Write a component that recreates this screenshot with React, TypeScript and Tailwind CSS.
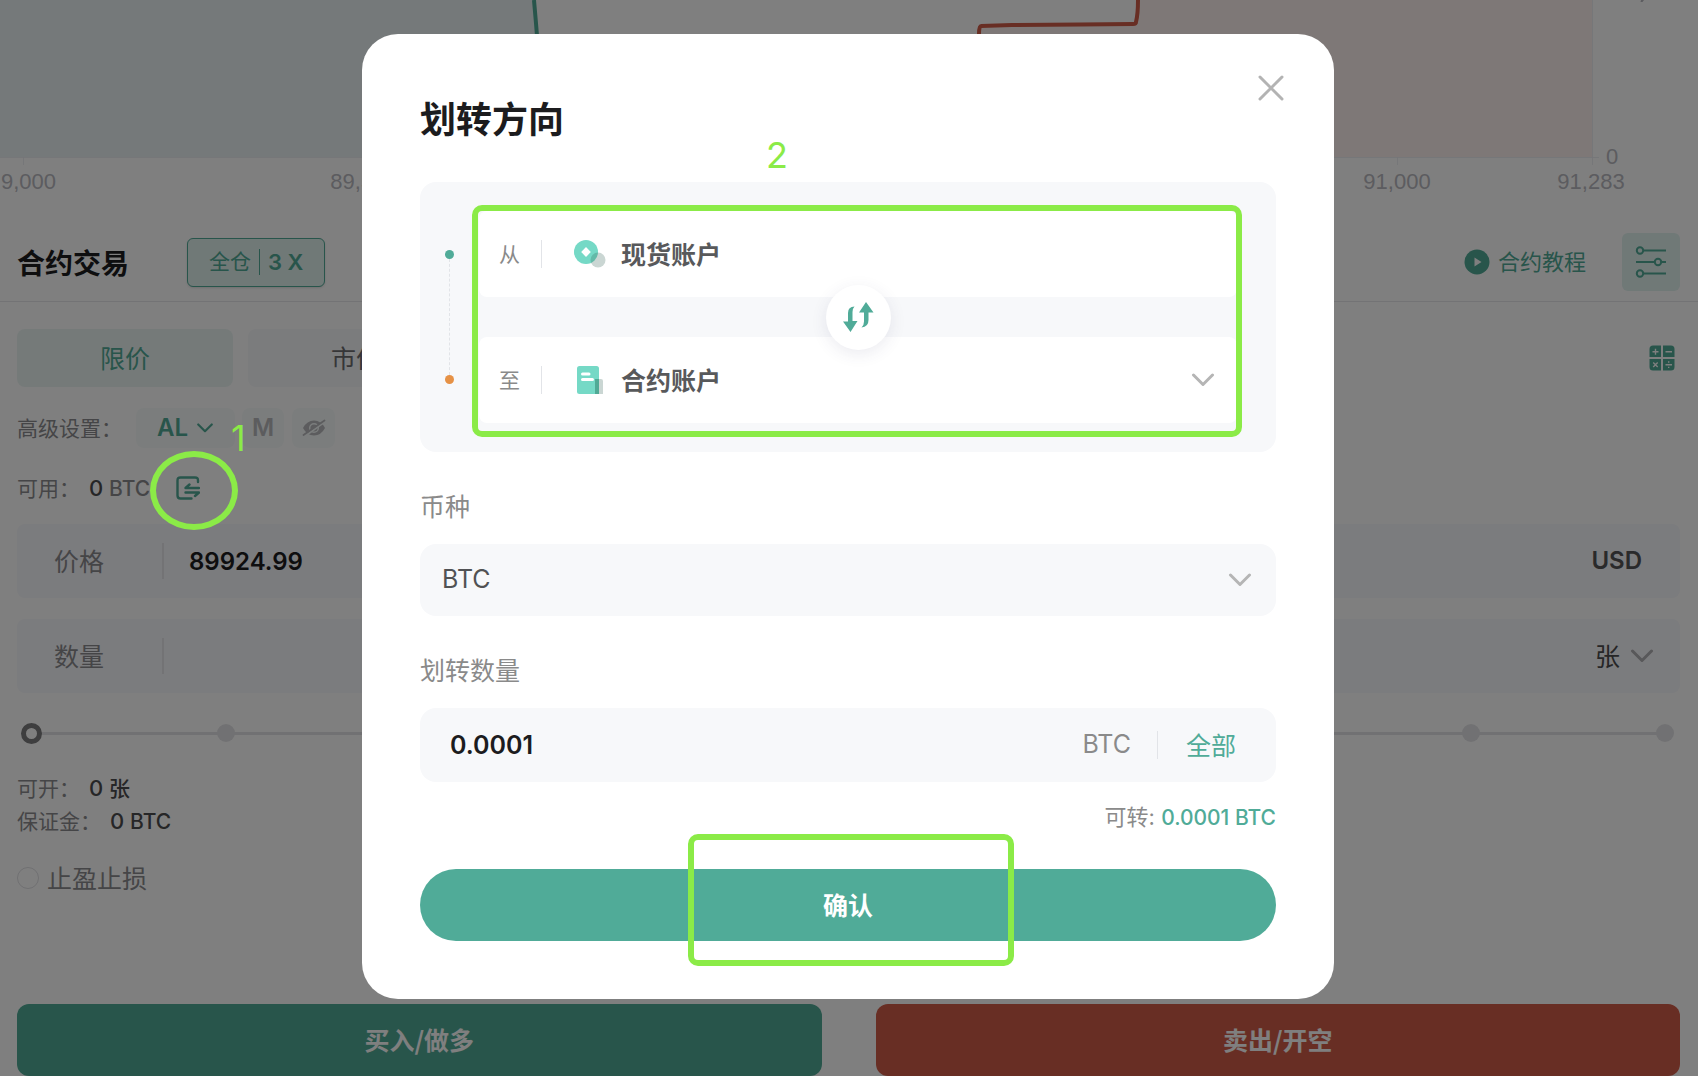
import { useState, type ReactNode } from "react";
import clsx from "clsx";

const cjk = "font-['Noto_Sans_CJK_SC',sans-serif]";

function Chevron({ className }: { className?: string }) {
  return (
    <svg
      viewBox="0 0 24 14"
      fill="none"
      stroke="currentColor"
      strokeWidth="3"
      strokeLinecap="round"
      strokeLinejoin="round"
      className={className}
      aria-hidden="true"
    >
      <path d="M2.5 2 12 11.5 21.5 2" />
    </svg>
  );
}

function DepthChart() {
  return (
    <svg viewBox="0 0 1698 223" className="block h-auto w-full" role="img" aria-label="深度图">
      <path d="M0 0H534C535 12 536 22 537 36L540 157H0Z" fill="#ebf3f4" />
      <path d="M1138 0 1136 24 981 26 979 60V157H1592V0Z" fill="#fcf1ef" />
      <path d="M534 0C535 12 536 22 537 36" fill="none" stroke="#50aa96" strokeWidth="4" />
      <path
        d="M1138 0C1138 10 1137 18 1136 22Q1136 24 1133 24L1080 24.500 1012 25 981 26Q979 26 979 34V60"
        fill="none"
        stroke="#d15c48"
        strokeWidth="4"
      />
      <path
        d="M0 157.500H1599M1592.500 0V165M23.500 157V165M364.500 157V165M1397.500 157V165"
        stroke="#e8eaf0"
        strokeOpacity="0.8"
        fill="none"
      />
      <g
        className="font-['Liberation_Sans',Arial,sans-serif] text-[22px]"
        fill="#b8b8c0"
        textAnchor="middle"
      >
        <text x="1" y="189" textAnchor="start">
          9,000
        </text>
        <text x="364" y="189">89,500</text>
        <text x="1397" y="189">91,000</text>
        <text x="1591" y="189">91,283</text>
        <text x="1612" y="164">0</text>
      </g>
      <path d="M1641 0h3l-1.500 2h-2z" fill="#b8b8c0" />
    </svg>
  );
}

function PlayIcon() {
  return (
    <svg viewBox="0 0 26 26" className="size-[26px]" aria-hidden="true">
      <circle cx="13" cy="13" r="12.500" fill="#50aa96" />
      <path d="M10.500 8.500v9l7-4.500z" fill="#fff" />
    </svg>
  );
}

function SlidersIcon() {
  return (
    <svg
      viewBox="0 0 32 32"
      className="size-8"
      fill="none"
      stroke="#50aa96"
      strokeWidth="2"
      aria-hidden="true"
    >
      <circle cx="5" cy="4.500" r="3.200" />
      <path d="M8 4.500H31" />
      <circle cx="23" cy="16" r="3.200" />
      <path d="M1 16H20M26 16h5" />
      <circle cx="5" cy="27.500" r="3.200" />
      <path d="M8 27.500H31" />
    </svg>
  );
}

function CalculatorIcon() {
  return (
    <svg viewBox="0 0 26 26" className="size-[26px]" aria-hidden="true">
      <path
        d="M4 0.500h8v11.500H0.500V4Q0.500 0.500 4 0.500zM14 0.500h8q3.500 0 3.500 3.500v8H14zM0.500 14H12v11.500H4q-3.500 0-3.500-3.500zM14 14h11.500v8q0 3.500-3.500 3.500h-8z"
        fill="#50aa96"
      />
      <path
        d="M3.500 6.700h6M6.500 3.700v6M16.500 6.700h6.500M4.200 17.500l4.500 4.500M8.700 17.500l-4.500 4.500M16.500 19.700h6.500M19.700 16.300v1.400M19.700 21.700v1.400"
        stroke="#fff"
        strokeWidth="1.400"
      />
    </svg>
  );
}

function HiddenIcon() {
  return (
    <svg viewBox="0 0 24 18" className="h-[18px] w-6" aria-hidden="true">
      <path
        fillRule="evenodd"
        d="M1 9Q5 1.500 12 1.500T23 9Q19 16.500 12 16.500T1 9zM12 4a5 5 0 1 0 0 10 5 5 0 0 0 0-10z"
        fill="#b8b8bc"
      />
      <circle cx="12" cy="9" r="3.600" fill="#b8b8bc" />
      <path d="M2.500 17.500 22.500 3" stroke="#f6fbfa" strokeWidth="2" />
      <path d="M1.500 16 22.500 1.500" stroke="#b8b8bc" strokeWidth="1.800" strokeLinecap="round" />
    </svg>
  );
}

function TransferIcon() {
  return (
    <svg
      viewBox="0 0 24 24"
      className="size-6"
      fill="none"
      stroke="#50aa96"
      strokeWidth="2.400"
      strokeLinecap="round"
      strokeLinejoin="round"
      aria-hidden="true"
    >
      <path d="M22 6V4.500Q22 1.500 19 1.500H4.500Q1.500 1.500 1.500 4.500v15Q1.500 22.500 4.500 22.500H15.500" />
      <path d="M23 12H9.500l4-3.500M9.500 16.500H23l-4 3.500" />
    </svg>
  );
}

function SpotIcon() {
  return (
    <svg viewBox="0 0 32 28" className="h-7 w-8" aria-hidden="true">
      <circle cx="12" cy="12" r="12" fill="#75d9c6" />
      <path d="M12 7 16.800 12 12 17 7.200 12z" fill="#fff" />
      <circle cx="24" cy="20" r="7.500" fill="#335f55" fillOpacity="0.260" />
    </svg>
  );
}

function ContractIcon() {
  return (
    <svg viewBox="0 0 32 28" className="h-7 w-8" aria-hidden="true">
      <rect x="3" y="0" width="22" height="28" rx="2.500" fill="#75d9c6" />
      <path d="M8.500 8h6.500M8.500 13.500h10" stroke="#fff" strokeWidth="3" strokeLinecap="round" />
      <path d="M21 13h4v15h-4z" fill="#50aa96" />
      <path d="M25 13h2q2 0 2 2v13h-4z" fill="#335f55" fillOpacity="0.260" />
    </svg>
  );
}

function SwapIcon() {
  return (
    <svg viewBox="0 0 32 32" className="size-8" fill="#50ab98" aria-hidden="true">
      <path d="M12.500 5.500Q10.500 7.500 10.500 11v9H15.500L8.500 31 1 20.500H6V12Q6 5.500 12.500 5.500z" />
      <path d="M24 1 31.500 11.500H26.500V19Q26.500 26 19.500 26.500 22 24.500 22 20.500V11.500H17z" />
    </svg>
  );
}

function Stat({ label, children }: { label: string; children: ReactNode }) {
  return (
    <div className="flex items-center text-[22px] leading-[33px]">
      <span className="text-[21px] text-[#8b8b8e]">{label}：</span>
      <span className="ml-[9px] font-medium text-[#4c4c4e]">{children}</span>
    </div>
  );
}

function TradePanel() {
  const [quantity, setQuantity] = useState("");
  const [price, setPrice] = useState("89924.99");

  return (
    <main className="flex min-h-screen flex-col">
      <DepthChart />
      <header className="flex h-[79px] items-center border-b border-[#e6e6ea] pr-[18px] pl-[17px]">
        <h1 className={clsx(cjk, "text-[28px] leading-8 font-bold text-[#1c1c1e]")}>合约交易</h1>
        <button
          type="button"
          className="ml-[58px] flex h-[49px] items-center rounded-md border border-[#50aa96] bg-[#e0f2ef] px-[21px] text-[22px] text-[#50aa96] shadow-sm"
        >
          <span className="text-[21px]">全仓</span>
          <span className="mx-2 h-[26px] w-px bg-[#50aa96]" />
          <span className="font-semibold">3 X</span>
        </button>
        <a
          href="#tutorial"
          className="ml-auto flex items-center gap-2 text-[22px] leading-8 text-[#50aa96]"
        >
          <PlayIcon />
          合约教程
        </a>
        <button
          type="button"
          aria-label="设置"
          className="ml-9 flex size-[58px] items-center justify-center rounded-md bg-[#e0f2ef]"
        >
          <SlidersIcon />
        </button>
      </header>

      <div className="flex flex-col px-[17px] pr-[18px]">
        <div className={clsx(cjk, "mt-[27px] flex h-[58px] gap-[15px] text-[25px]")}>
          <button type="button" className="w-[216px] rounded-lg bg-[#ebf5f3] text-[#50aa96]">
            限价
          </button>
          <button type="button" className="w-[216px] rounded-lg bg-[#f7f8fa] text-[#6c6c70]">
            市价
          </button>
          <button type="button" aria-label="计算器" className="mr-[5px] ml-auto">
            <CalculatorIcon />
          </button>
        </div>

        <div className="mt-[21px] flex h-10 items-center text-[#8b8b8e]">
          <span className={clsx(cjk, "w-[119px] text-[21px] whitespace-nowrap")}>高级设置：</span>
          <button
            type="button"
            className="flex h-10 w-[99px] items-center justify-center gap-2 rounded-lg bg-[#f6fbfa] text-[24px] font-semibold text-[#50aa96]"
          >
            AL
            <Chevron className="h-[10px] w-[18px]" />
          </button>
          <button
            type="button"
            className="ml-[7px] h-10 w-[42px] rounded-lg bg-[#f6fbfa] text-[24px] font-semibold text-[#b8b8bc]"
          >
            M
          </button>
          <button
            type="button"
            aria-label="隐藏"
            className="ml-2 flex h-10 w-[43px] items-center justify-center rounded-lg bg-[#f6fbfa]"
          >
            <HiddenIcon />
          </button>
        </div>

        <div className="mt-5 flex h-10 items-center">
          <Stat label="可用">
            0 <span className="text-[21px] text-[#8b8b8e]">BTC</span>
          </Stat>
          <button type="button" aria-label="划转" className="ml-[26px]">
            <TransferIcon />
          </button>
        </div>

        <label className="mt-4 flex h-[74px] items-center rounded-lg bg-[#f7f8fc] pr-[38px] pl-[37px] text-[25px] text-[#8b8b8e]">
          <span className={clsx(cjk, "w-[108px]")}>价格</span>
          <span className="h-9 w-0.5 bg-[#e6e6ea]" />
          <input
            value={price}
            onChange={(e) => setPrice(e.target.value)}
            className="ml-[25px] h-full min-w-0 flex-1 bg-transparent text-[24px] font-semibold text-[#1c1c1e] outline-none"
          />
          <span className="text-[24px] font-semibold text-[#545456]">USD</span>
        </label>

        <div className="mt-[21px] flex h-[74px] items-center rounded-lg bg-[#f7f8fc] pr-[26px] pl-[37px] text-[25px] text-[#8b8b8e]">
          <label htmlFor="quantity" className={clsx(cjk, "w-[108px]")}>
            数量
          </label>
          <span className="h-9 w-0.5 bg-[#e6e6ea]" />
          <input
            id="quantity"
            value={quantity}
            onChange={(e) => setQuantity(e.target.value)}
            className="ml-[25px] h-full min-w-0 flex-1 bg-transparent font-semibold text-[#1c1c1e] outline-none"
          />
          <button type="button" className={clsx(cjk, "flex items-center gap-[10px] text-[#4c4c4e]")}>
            张
            <Chevron className="h-[14px] w-6 text-[#b0b0b4]" />
          </button>
        </div>

        <div className="relative mt-7 flex h-6 items-center justify-between px-[6px]">
          <span className="absolute inset-x-4 h-[3px] bg-[#e3e3e6]" />
          <div className="relative flex items-center gap-[176px]">
            <span className="size-[18px] rounded-full bg-[#e3e3e6]" />
            <span className="size-[18px] rounded-full bg-[#e3e3e6]" />
          </div>
          <div className="relative flex items-center gap-[176px]">
            <span className="size-[18px] rounded-full bg-[#e3e3e6]" />
            <span className="size-[18px] rounded-full bg-[#e3e3e6]" />
          </div>
          <input
            type="range"
            aria-label="仓位比例"
            defaultValue={0}
            className="absolute inset-x-1 h-6 appearance-none bg-transparent [&::-webkit-slider-thumb]:size-[21px] [&::-webkit-slider-thumb]:appearance-none [&::-webkit-slider-thumb]:rounded-full [&::-webkit-slider-thumb]:border-5 [&::-webkit-slider-thumb]:border-[#7c7c7e] [&::-webkit-slider-thumb]:bg-white"
          />
        </div>

        <div className="mt-[27px]">
          <Stat label="可开">
            0 <span className="text-[21px]">张</span>
          </Stat>
          <Stat label="保证金">
            0 <span className="text-[21px]">BTC</span>
          </Stat>
        </div>

        <label
          className={clsx(cjk, "mt-6 flex h-8 items-center gap-2 text-[25px] text-[#8b8b8e]")}
        >
          <input
            type="checkbox"
            className="size-[22px] appearance-none rounded-full border border-[#e0e0e4]"
          />
          止盈止损
        </label>
      </div>

      <div
        className={clsx(
          cjk,
          "mt-auto flex gap-[54px] pr-[18px] pl-[17px] text-[25px] font-bold text-white",
        )}
      >
        <button type="button" className="h-[72px] flex-1 rounded-xl bg-[#50aa96]">
          买入/做多
        </button>
        <button type="button" className="h-[72px] flex-1 rounded-xl bg-[#d15c48]">
          卖出/开空
        </button>
      </div>
    </main>
  );
}

function TransferDialog() {
  const [amount, setAmount] = useState("0.0001");

  return (
    <section
      role="dialog"
      aria-modal="true"
      aria-labelledby="transfer-title"
      className="relative w-full max-w-[972px] rounded-[36px] bg-white p-[58px]"
    >
      <button type="button" aria-label="关闭" className="absolute top-[39px] right-12 p-px">
        <svg
          viewBox="0 0 28 28"
          className="size-7"
          stroke="#b3b3b3"
          strokeWidth="3"
          strokeLinecap="round"
          aria-hidden="true"
        >
          <path d="M3 3 25 25M25 3 3 25" />
        </svg>
      </button>
      <h2
        id="transfer-title"
        className="mt-[5px] text-[36px] leading-[46px] font-bold text-[#1c1c1e]"
      >
        划转方向
      </h2>

      <div className="mt-[39px] flex rounded-2xl bg-[#f7f8fa] py-[29px] pr-[39px]">
        <div className="flex w-[59px] flex-col items-center py-[39px]">
          <span className="size-[9px] rounded-full bg-[#50ab98]" />
          <span className="w-px flex-1 border-l border-dashed border-[#e2e4e8]" />
          <span className="size-[9px] rounded-full bg-[#e69145]" />
        </div>
        <div className="flex-1">
          <div className={clsx(cjk, "flex h-[86px] items-center rounded-lg bg-white pl-5")}>
            <span className="w-[42px] text-[21px] text-[#8a8a8a]">从</span>
            <span className="mr-8 h-7 w-px bg-[#e2e4e8]" />
            <SpotIcon />
            <span className="ml-[15px] text-[25px] font-bold text-[#58595b]">现货账户</span>
          </div>
          <div className="flex h-10 items-center justify-center">
            <button
              type="button"
              aria-label="交换"
              className="relative flex size-[65px] shrink-0 items-center justify-center rounded-full bg-white shadow-[0_4px_16px_rgba(60,60,110,0.1)]"
            >
              <SwapIcon />
            </button>
          </div>
          <div className={clsx(cjk, "flex h-[86px] items-center rounded-lg bg-white pr-[22px] pl-5")}>
            <label htmlFor="target" className="w-[42px] text-[21px] text-[#8a8a8a]">
              至
            </label>
            <span className="mr-8 h-7 w-px bg-[#e2e4e8]" />
            <ContractIcon />
            <select
              id="target"
              className="ml-[15px] h-full flex-1 appearance-none bg-transparent text-[25px] font-bold text-[#58595b] outline-none"
            >
              <option>合约账户</option>
            </select>
            <Chevron className="pointer-events-none h-[14px] w-6 text-[#b5b5b5]" />
          </div>
        </div>
      </div>

      <label htmlFor="coin" className="mt-9 block text-[25px] leading-[38px] text-[#8a8a8a]">
        币种
      </label>
      <div className="mt-[18px] flex h-[72px] items-center rounded-2xl bg-[#f7f8fa] pr-6 pl-[22px]">
        <select
          id="coin"
          className="h-full flex-1 appearance-none bg-transparent text-[25px] text-[#515254] outline-none"
        >
          <option>BTC</option>
        </select>
        <Chevron className="pointer-events-none h-[14px] w-6 text-[#b5b5b5]" />
      </div>

      <label htmlFor="amount" className="mt-9 block text-[25px] leading-[38px] text-[#8a8a8a]">
        划转数量
      </label>
      <div className="mt-[18px] flex h-[74px] items-center rounded-2xl bg-[#f7f8fa] pr-10 pl-[30px] text-[25px]">
        <input
          id="amount"
          value={amount}
          onChange={(e) => setAmount(e.target.value)}
          className="h-full min-w-0 flex-1 bg-transparent font-semibold text-[#1c1c1e] outline-none"
        />
        <span className="text-[#8a8a8a]">BTC</span>
        <span className="mr-7 ml-[26px] h-7 w-px bg-[#e2e4e8]" />
        <button type="button" className={clsx(cjk, "text-[#50ab98]")}>
          全部
        </button>
      </div>

      <p className="mt-[19px] text-right text-[22px] leading-8 text-[#8a8a8a]">
        可转: <span className="text-[21px] font-medium text-[#50ab98]">0.0001 BTC</span>
      </p>

      <button
        type="button"
        className={clsx(
          cjk,
          "mt-[35px] block h-[72px] w-full rounded-full bg-[#50ab98] text-[25px] font-bold text-white",
        )}
      >
        确认
      </button>

      {/* markers drawn over the dialog */}
      <span className="absolute top-[98px] left-[404px] text-[36px] leading-[46px] text-[#8beb47]">2</span>
      <span className="pointer-events-none absolute top-[171px] right-[92px] left-[110px] h-[232px] rounded-[10px] border-6 border-[#8beb47]" />
      <span className="pointer-events-none absolute bottom-[33px] left-[326px] h-[132px] w-[326px] rounded-[10px] border-6 border-[#8beb47]" />
    </section>
  );
}

export default function App() {
  return (
    <div
      lang="zh-CN"
      className="relative min-h-screen bg-white font-['Inter','Noto_Sans_CJK_SC',sans-serif]"
    >
      <TradePanel />
      <div className="absolute inset-0 flex items-start justify-center bg-black/50 pt-[34px] pr-0.5">
        <TransferDialog />
        <span className="absolute top-[415px] left-[231px] text-[36px] leading-[46px] text-[#8beb47]">1</span>
        <span className="pointer-events-none absolute top-[451px] left-[150px] h-[79px] w-[88px] rounded-[50%] border-6 border-[#8beb47]" />
      </div>
    </div>
  );
}
